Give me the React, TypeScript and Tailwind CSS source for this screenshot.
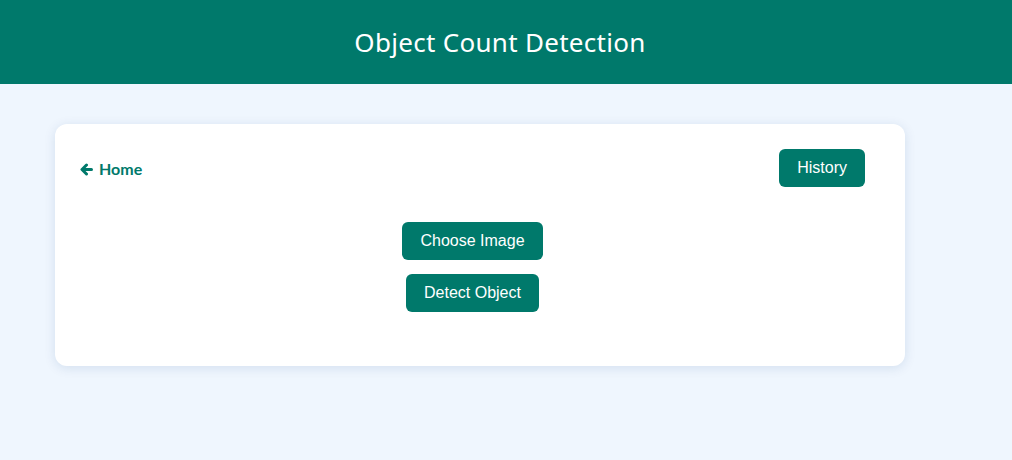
import React from "react";

export default function App() {
  return (
    <div className="min-h-[460px] bg-[#eff6fe] font-['Liberation_Sans',Arial,sans-serif]">
      <header className="h-[84px] bg-[#00796b] flex items-center justify-center pr-[12px]">
        <h1 className="text-white text-[26px] font-['Noto_Sans',sans-serif] tracking-[0.3px]">Object Count Detection</h1>
      </header>
      <div className="pt-[40px] pl-[55px]">
        <div className="w-[850px] h-[242px] bg-white rounded-[12px] shadow-[0_2px_12px_rgba(0,60,120,0.12)] pt-[25px] pl-[25px] pr-[40px]">
          <div className="flex items-center justify-between h-[38px]">
            <a className="flex items-center gap-[6px] text-[#00796b] font-['Lato',sans-serif] font-bold text-[16px] mt-[2px]">
              <svg width="13" height="13" viewBox="0 0 13 13" className="mt-[1px]">
                <path d="M11.5 6.5H2.5M6.5 2L2 6.5L6.5 11" fill="none" stroke="#00796b" strokeWidth="3" strokeLinecap="round" strokeLinejoin="round" />
              </svg>
              Home
            </a>
            <button className="h-[38px] px-[18px] bg-[#00796b] text-white text-[16px] rounded-[6px]">History</button>
          </div>
          <div className="flex flex-col items-center gap-[14px] mt-[35px]">
            <button className="h-[38px] px-[18px] bg-[#00796b] text-white text-[16px] rounded-[6px]">Choose Image</button>
            <button className="h-[38px] px-[18px] bg-[#00796b] text-white text-[16px] rounded-[6px]">Detect Object</button>
          </div>
        </div>
      </div>
    </div>
  );
}
